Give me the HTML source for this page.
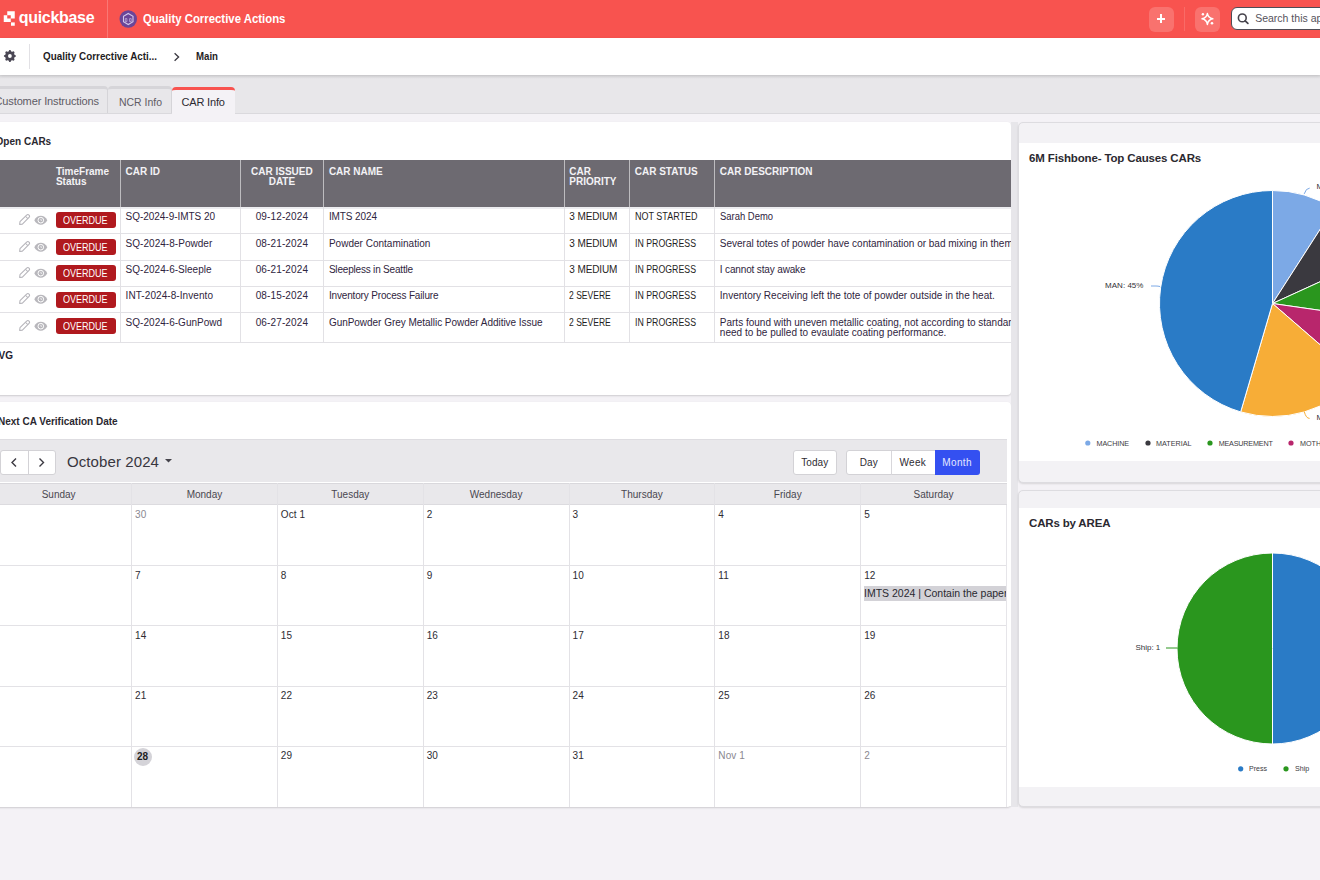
<!DOCTYPE html>
<html><head><meta charset="utf-8"><style>
html,body{margin:0;padding:0;}
body{width:1320px;height:880px;overflow:hidden;position:relative;background:#F4F2F6;font-family:"Liberation Sans",sans-serif;}
body>div,body>svg{position:absolute;}
.t{white-space:nowrap;}
</style></head><body>
<div style="left:0px;top:113px;width:1320px;height:767px;background:#F4F2F6;"></div>
<div style="left:0px;top:0px;width:1320px;height:38px;background:#F8534F;"></div>
<svg style="left:0;top:0" width="20" height="38"><path fill="#fff" fill-rule="evenodd" d="M7.25 11.25h7.5v7.25h-7.5z M3.75 15.25h7v6.75h-7z"/><rect x="11" y="22.4" width="3.75" height="3.35" fill="#fff"/></svg>
<div class="t" style="left:18.75px;top:9.66px;font-size:16px;line-height:16px;color:#fff;font-weight:700;letter-spacing:-0.307px;">quickbase</div>
<div style="left:107px;top:0px;width:1px;height:38px;background:rgba(255,255,255,0.22);"></div>
<svg style="left:119px;top:10px" width="18" height="18" viewBox="0 0 18 18"><circle cx="9.25" cy="9" r="8.75" fill="#6A4598"/><path d="M9.25 3.5 L14 6.25 L14 11.75 L9.25 14.5 L4.5 11.75 L4.5 6.25 Z" fill="none" stroke="#D3C7EA" stroke-width="1.1"/><path d="M6.3 8.6 h1.6 v3 h-1.6 z M10.6 8.6 h1.6 v3 h-1.6 z" fill="none" stroke="#C9BCE4" stroke-width="0.7"/></svg>
<div class="t" style="left:143.40px;top:12.84px;font-size:12px;line-height:12px;color:#fff;font-weight:700;transform:scaleX(0.9477);transform-origin:0 0;">Quality Corrective Actions</div>
<div style="left:1149px;top:6.5px;width:25px;height:25px;background:rgba(255,255,255,0.18);border-radius:6px;"></div>
<div style="left:1156.5px;top:18px;width:8.8px;height:1.6px;background:#fff;"></div>
<div style="left:1160.1px;top:14.4px;width:1.6px;height:8.8px;background:#fff;"></div>
<div style="left:1184.3px;top:7.3px;width:1px;height:23.4px;background:rgba(255,255,255,0.14);"></div>
<div style="left:1195.3px;top:6.5px;width:25px;height:25px;background:rgba(255,255,255,0.18);border-radius:6px;"></div>
<svg style="left:1195px;top:6px" width="26" height="26" viewBox="0 0 26 26"><path d="M12.4 7.6 Q13.2 11.9 17.8 12.8 Q13.2 13.7 12.4 18.4 Q11.6 13.7 7 12.8 Q11.6 11.9 12.4 7.6 Z" fill="none" stroke="#fff" stroke-width="1.5" stroke-linejoin="round"/><circle cx="7.9" cy="8.3" r="1.2" fill="#fff"/><circle cx="17" cy="17.3" r="1.3" fill="#fff"/></svg>
<div style="left:1230.6px;top:7.3px;width:120px;height:23.2px;background:#fff;border:1.2px solid #4F4C55;border-radius:6px;box-sizing:border-box;"></div>
<svg style="left:1236px;top:11px" width="16" height="16" viewBox="0 0 16 16"><circle cx="6.3" cy="6.9" r="3.9" fill="none" stroke="#46434C" stroke-width="1.6"/><path d="M9.2 9.8 L11.9 12.3" stroke="#46434C" stroke-width="1.7" stroke-linecap="round"/></svg>
<div class="t" style="left:1255.20px;top:12.91px;font-size:10.5px;line-height:10.5px;color:#55525C;">Search this app</div>
<div style="left:0px;top:38px;width:1320px;height:37px;background:#fff;box-shadow:0 1px 3px rgba(0,0,0,0.12);z-index:2;"></div>
<svg style="left:0;top:38px;z-index:3" width="30" height="37"><path fill="#4A4754" fill-rule="evenodd" d="M8.56 13.39 L9.29 12.03 L10.51 12.03 L11.24 13.39 L12.21 13.79 L13.69 13.35 L14.55 14.21 L14.11 15.69 L14.51 16.66 L15.87 17.39 L15.87 18.61 L14.51 19.34 L14.11 20.31 L14.55 21.79 L13.69 22.65 L12.21 22.21 L11.24 22.61 L10.51 23.97 L9.29 23.97 L8.56 22.61 L7.59 22.21 L6.11 22.65 L5.25 21.79 L5.69 20.31 L5.29 19.34 L3.93 18.61 L3.93 17.39 L5.29 16.66 L5.69 15.69 L5.25 14.21 L6.11 13.35 L7.59 13.79 Z M11.8 18 A1.9 1.9 0 1 0 8.0 18 A1.9 1.9 0 1 0 11.8 18 Z"/></svg>
<div style="left:29.3px;top:44px;width:1px;height:25px;background:#E2E1E5;z-index:3;"></div>
<div class="t" style="left:43.00px;top:50.69px;font-size:11px;line-height:11px;color:#1F1D24;font-weight:700;transform:scaleX(0.8951);transform-origin:0 0;z-index:3;">Quality Corrective Acti...</div>
<svg style="left:170px;top:50px;z-index:3" width="12" height="14" viewBox="0 0 12 14"><path d="M4.6 3.2 L8.6 7 L4.6 10.8" fill="none" stroke="#3A3840" stroke-width="1.3"/></svg>
<div class="t" style="left:196.00px;top:50.69px;font-size:11px;line-height:11px;color:#1F1D24;font-weight:700;transform:scaleX(0.8780);transform-origin:0 0;z-index:3;">Main</div>
<div style="left:0px;top:75px;width:1320px;height:38px;background:#E8E7EA;"></div>
<div style="left:0px;top:75px;width:1320px;height:4px;background:linear-gradient(rgba(0,0,0,0.06),rgba(0,0,0,0));"></div>
<div style="left:0px;top:112.5px;width:1320px;height:1px;background:#DAD9DD;"></div>
<div style="left:-20px;top:86.3px;width:128px;height:26.7px;background:#E8E7EA;border-top:3.3px solid #D6D5D9;border-right:1px solid #D5D4D8;border-radius:4px 4px 0 0;box-sizing:border-box;"></div>
<div class="t" style="left:-5.50px;top:96.49px;font-size:11px;line-height:11px;color:#5E5B65;letter-spacing:-0.123px;">Customer Instructions</div>
<div style="left:108px;top:86.3px;width:64px;height:26.7px;background:#E8E7EA;border-top:3.3px solid #D6D5D9;border-right:1px solid #D5D4D8;border-radius:4px 4px 0 0;box-sizing:border-box;"></div>
<div class="t" style="left:118.80px;top:96.59px;font-size:11px;line-height:11px;color:#5E5B65;transform:scaleX(0.9506);transform-origin:0 0;">NCR Info</div>
<div style="left:172px;top:86.6px;width:62.5px;height:27.4px;background:#F4F2F6;border-top:3px solid #F8534F;border-radius:4px 4px 0 0;box-sizing:border-box;z-index:2;"></div>
<div class="t" style="left:181.50px;top:96.59px;font-size:11px;line-height:11px;color:#2C2A31;letter-spacing:-0.166px;z-index:3;">CAR Info</div>
<div style="left:-14px;top:122px;width:1025px;height:273px;background:#fff;border-radius:4px;box-shadow:0 1px 2px rgba(0,0,0,0.16);"></div>
<div class="t" style="left:-4.50px;top:137.03px;font-size:10px;line-height:10px;color:#2A2830;font-weight:700;letter-spacing:0.015px;">Open CARs</div>
<div style="left:-14px;top:160.2px;width:1024.5px;height:47px;background:#6D6A71;"></div>
<div style="left:120.0px;top:160.2px;width:1px;height:47px;background:rgba(255,255,255,0.55);"></div>
<div style="left:239.9px;top:160.2px;width:1px;height:47px;background:rgba(255,255,255,0.55);"></div>
<div style="left:322.7px;top:160.2px;width:1px;height:47px;background:rgba(255,255,255,0.55);"></div>
<div style="left:564.1px;top:160.2px;width:1px;height:47px;background:rgba(255,255,255,0.55);"></div>
<div style="left:629.0px;top:160.2px;width:1px;height:47px;background:rgba(255,255,255,0.55);"></div>
<div style="left:713.9px;top:160.2px;width:1px;height:47px;background:rgba(255,255,255,0.55);"></div>
<div class="t" style="left:55.90px;top:166.53px;font-size:10px;line-height:10px;color:#F3F2F5;font-weight:700;">TimeFrame</div>
<div class="t" style="left:55.90px;top:176.94px;font-size:10px;line-height:10px;color:#F3F2F5;font-weight:700;">Status</div>
<div class="t" style="left:125.60px;top:166.53px;font-size:10px;line-height:10px;color:#F3F2F5;font-weight:700;">CAR ID</div>
<div class="t" style="left:251.06px;top:166.53px;font-size:10px;line-height:10px;color:#F3F2F5;font-weight:700;">CAR ISSUED</div>
<div class="t" style="left:268.66px;top:176.94px;font-size:10px;line-height:10px;color:#F3F2F5;font-weight:700;">DATE</div>
<div class="t" style="left:328.90px;top:166.53px;font-size:10px;line-height:10px;color:#F3F2F5;font-weight:700;">CAR NAME</div>
<div class="t" style="left:569.30px;top:166.53px;font-size:10px;line-height:10px;color:#F3F2F5;font-weight:700;">CAR</div>
<div class="t" style="left:569.30px;top:176.94px;font-size:10px;line-height:10px;color:#F3F2F5;font-weight:700;">PRIORITY</div>
<div class="t" style="left:634.70px;top:166.53px;font-size:10px;line-height:10px;color:#F3F2F5;font-weight:700;">CAR STATUS</div>
<div class="t" style="left:719.80px;top:166.53px;font-size:10px;line-height:10px;color:#F3F2F5;font-weight:700;">CAR DESCRIPTION</div>
<div style="left:-14px;top:207.2px;width:1024.5px;height:1.5px;background:#EDEDF0;"></div>
<div style="left:-14px;top:233.1px;width:1024.5px;height:1px;background:#E2E1E5;"></div>
<div style="left:-14px;top:259.5px;width:1024.5px;height:1px;background:#E2E1E5;"></div>
<div style="left:-14px;top:285.9px;width:1024.5px;height:1px;background:#E2E1E5;"></div>
<div style="left:-14px;top:312.3px;width:1024.5px;height:1px;background:#E2E1E5;"></div>
<div style="left:-14px;top:342.3px;width:1024.5px;height:1px;background:#E2E1E5;"></div>
<div style="left:120.0px;top:207.2px;width:1px;height:136px;background:#E2E1E5;"></div>
<div style="left:239.9px;top:207.2px;width:1px;height:136px;background:#E2E1E5;"></div>
<div style="left:322.7px;top:207.2px;width:1px;height:136px;background:#E2E1E5;"></div>
<div style="left:564.1px;top:207.2px;width:1px;height:136px;background:#E2E1E5;"></div>
<div style="left:629.0px;top:207.2px;width:1px;height:136px;background:#E2E1E5;"></div>
<div style="left:713.9px;top:207.2px;width:1px;height:136px;background:#E2E1E5;"></div>
<svg style="left:17px;top:207.2px" width="34" height="26" viewBox="17 0 34 26"><g transform="translate(24.3 12.8) rotate(-45)"><path d="M-6.6 0 L-4.4 -1.7 L5 -1.7 Q6.7 -1.7 6.7 0 Q6.7 1.7 5 1.7 L-4.4 1.7 Z" fill="none" stroke="#B5B4BA" stroke-width="1.05" stroke-linejoin="round"/><path d="M3.3 -1.7 V1.7" stroke="#B5B4BA" stroke-width="1"/></g><path d="M34.3 13.2 C37.2 7.3 44.4 7.3 47.3 13.2 C44.4 19.1 37.2 19.1 34.3 13.2 Z" fill="#B8B7BC"/><circle cx="40.8" cy="13.2" r="2.8" fill="none" stroke="#fff" stroke-width="1"/><circle cx="40.8" cy="13.2" r="1.7" fill="#B8B7BC"/><path d="M40.9 11.8 L40.9 13.3 L42.1 13.3" stroke="#fff" stroke-width="0.7" fill="none"/></svg>
<div style="left:55.5px;top:212.39999999999998px;width:60.4px;height:16.1px;background:#B0191E;border-radius:3px;"></div>
<div class="t" style="left:63.40px;top:215.19px;font-size:11px;line-height:11px;color:#fff;transform:scaleX(0.8199);transform-origin:0 0;">OVERDUE</div>
<div class="t" style="left:125.60px;top:212.23px;font-size:10px;line-height:10px;color:#2F2540;letter-spacing:-0.037px;">SQ-2024-9-IMTS 20</div>
<div class="t" style="left:255.70px;top:212.23px;font-size:10px;line-height:10px;color:#2F2540;letter-spacing:0.125px;">09-12-2024</div>
<div class="t" style="left:328.90px;top:212.23px;font-size:10px;line-height:10px;color:#2F2540;letter-spacing:-0.101px;">IMTS 2024</div>
<div class="t" style="left:569.30px;top:212.23px;font-size:10px;line-height:10px;color:#1F1E23;letter-spacing:-0.112px;">3 MEDIUM</div>
<div class="t" style="left:634.70px;top:212.23px;font-size:10px;line-height:10px;color:#1F1E23;transform:scaleX(0.8999);transform-origin:0 0;">NOT STARTED</div>
<div class="t" style="left:719.80px;top:212.23px;font-size:10px;line-height:10px;color:#2F2540;transform:scaleX(0.9441);transform-origin:0 0;">Sarah Demo</div>
<svg style="left:17px;top:233.6px" width="34" height="26" viewBox="17 0 34 26"><g transform="translate(24.3 12.8) rotate(-45)"><path d="M-6.6 0 L-4.4 -1.7 L5 -1.7 Q6.7 -1.7 6.7 0 Q6.7 1.7 5 1.7 L-4.4 1.7 Z" fill="none" stroke="#B5B4BA" stroke-width="1.05" stroke-linejoin="round"/><path d="M3.3 -1.7 V1.7" stroke="#B5B4BA" stroke-width="1"/></g><path d="M34.3 13.2 C37.2 7.3 44.4 7.3 47.3 13.2 C44.4 19.1 37.2 19.1 34.3 13.2 Z" fill="#B8B7BC"/><circle cx="40.8" cy="13.2" r="2.8" fill="none" stroke="#fff" stroke-width="1"/><circle cx="40.8" cy="13.2" r="1.7" fill="#B8B7BC"/><path d="M40.9 11.8 L40.9 13.3 L42.1 13.3" stroke="#fff" stroke-width="0.7" fill="none"/></svg>
<div style="left:55.5px;top:238.79999999999998px;width:60.4px;height:16.1px;background:#B0191E;border-radius:3px;"></div>
<div class="t" style="left:63.40px;top:241.59px;font-size:11px;line-height:11px;color:#fff;transform:scaleX(0.8199);transform-origin:0 0;">OVERDUE</div>
<div class="t" style="left:125.60px;top:238.63px;font-size:10px;line-height:10px;color:#2F2540;letter-spacing:0.034px;">SQ-2024-8-Powder</div>
<div class="t" style="left:255.70px;top:238.63px;font-size:10px;line-height:10px;color:#2F2540;letter-spacing:0.125px;">08-21-2024</div>
<div class="t" style="left:328.90px;top:238.63px;font-size:10px;line-height:10px;color:#2F2540;letter-spacing:0.016px;">Powder Contamination</div>
<div class="t" style="left:569.30px;top:238.63px;font-size:10px;line-height:10px;color:#1F1E23;letter-spacing:-0.112px;">3 MEDIUM</div>
<div class="t" style="left:634.70px;top:238.63px;font-size:10px;line-height:10px;color:#1F1E23;transform:scaleX(0.8782);transform-origin:0 0;">IN PROGRESS</div>
<div class="t" style="left:719.80px;top:238.63px;font-size:10px;line-height:10px;color:#2F2540;">Several totes of powder have contamination or bad mixing in them. Need</div>
<svg style="left:17px;top:260.0px" width="34" height="26" viewBox="17 0 34 26"><g transform="translate(24.3 12.8) rotate(-45)"><path d="M-6.6 0 L-4.4 -1.7 L5 -1.7 Q6.7 -1.7 6.7 0 Q6.7 1.7 5 1.7 L-4.4 1.7 Z" fill="none" stroke="#B5B4BA" stroke-width="1.05" stroke-linejoin="round"/><path d="M3.3 -1.7 V1.7" stroke="#B5B4BA" stroke-width="1"/></g><path d="M34.3 13.2 C37.2 7.3 44.4 7.3 47.3 13.2 C44.4 19.1 37.2 19.1 34.3 13.2 Z" fill="#B8B7BC"/><circle cx="40.8" cy="13.2" r="2.8" fill="none" stroke="#fff" stroke-width="1"/><circle cx="40.8" cy="13.2" r="1.7" fill="#B8B7BC"/><path d="M40.9 11.8 L40.9 13.3 L42.1 13.3" stroke="#fff" stroke-width="0.7" fill="none"/></svg>
<div style="left:55.5px;top:265.2px;width:60.4px;height:16.1px;background:#B0191E;border-radius:3px;"></div>
<div class="t" style="left:63.40px;top:267.99px;font-size:11px;line-height:11px;color:#fff;transform:scaleX(0.8199);transform-origin:0 0;">OVERDUE</div>
<div class="t" style="left:125.60px;top:265.04px;font-size:10px;line-height:10px;color:#2F2540;letter-spacing:0.023px;">SQ-2024-6-Sleeple</div>
<div class="t" style="left:255.70px;top:265.04px;font-size:10px;line-height:10px;color:#2F2540;letter-spacing:0.125px;">06-21-2024</div>
<div class="t" style="left:328.90px;top:265.04px;font-size:10px;line-height:10px;color:#2F2540;letter-spacing:-0.192px;">Sleepless in Seattle</div>
<div class="t" style="left:569.30px;top:265.04px;font-size:10px;line-height:10px;color:#1F1E23;letter-spacing:-0.112px;">3 MEDIUM</div>
<div class="t" style="left:634.70px;top:265.04px;font-size:10px;line-height:10px;color:#1F1E23;transform:scaleX(0.8782);transform-origin:0 0;">IN PROGRESS</div>
<div class="t" style="left:719.80px;top:265.04px;font-size:10px;line-height:10px;color:#2F2540;letter-spacing:-0.147px;">I cannot stay awake</div>
<svg style="left:17px;top:286.4px" width="34" height="26" viewBox="17 0 34 26"><g transform="translate(24.3 12.8) rotate(-45)"><path d="M-6.6 0 L-4.4 -1.7 L5 -1.7 Q6.7 -1.7 6.7 0 Q6.7 1.7 5 1.7 L-4.4 1.7 Z" fill="none" stroke="#B5B4BA" stroke-width="1.05" stroke-linejoin="round"/><path d="M3.3 -1.7 V1.7" stroke="#B5B4BA" stroke-width="1"/></g><path d="M34.3 13.2 C37.2 7.3 44.4 7.3 47.3 13.2 C44.4 19.1 37.2 19.1 34.3 13.2 Z" fill="#B8B7BC"/><circle cx="40.8" cy="13.2" r="2.8" fill="none" stroke="#fff" stroke-width="1"/><circle cx="40.8" cy="13.2" r="1.7" fill="#B8B7BC"/><path d="M40.9 11.8 L40.9 13.3 L42.1 13.3" stroke="#fff" stroke-width="0.7" fill="none"/></svg>
<div style="left:55.5px;top:291.59999999999997px;width:60.4px;height:16.1px;background:#B0191E;border-radius:3px;"></div>
<div class="t" style="left:63.40px;top:294.39px;font-size:11px;line-height:11px;color:#fff;transform:scaleX(0.8199);transform-origin:0 0;">OVERDUE</div>
<div class="t" style="left:125.60px;top:291.44px;font-size:10px;line-height:10px;color:#2F2540;letter-spacing:0.074px;">INT-2024-8-Invento</div>
<div class="t" style="left:255.70px;top:291.44px;font-size:10px;line-height:10px;color:#2F2540;letter-spacing:0.125px;">08-15-2024</div>
<div class="t" style="left:328.90px;top:291.44px;font-size:10px;line-height:10px;color:#2F2540;letter-spacing:-0.155px;">Inventory Process Failure</div>
<div class="t" style="left:569.30px;top:291.44px;font-size:10px;line-height:10px;color:#1F1E23;transform:scaleX(0.8546);transform-origin:0 0;">2 SEVERE</div>
<div class="t" style="left:634.70px;top:291.44px;font-size:10px;line-height:10px;color:#1F1E23;transform:scaleX(0.8782);transform-origin:0 0;">IN PROGRESS</div>
<div class="t" style="left:719.80px;top:291.44px;font-size:10px;line-height:10px;color:#2F2540;letter-spacing:0.015px;">Inventory Receiving left the tote of powder outside in the heat.</div>
<svg style="left:17px;top:312.8px" width="34" height="26" viewBox="17 0 34 26"><g transform="translate(24.3 12.8) rotate(-45)"><path d="M-6.6 0 L-4.4 -1.7 L5 -1.7 Q6.7 -1.7 6.7 0 Q6.7 1.7 5 1.7 L-4.4 1.7 Z" fill="none" stroke="#B5B4BA" stroke-width="1.05" stroke-linejoin="round"/><path d="M3.3 -1.7 V1.7" stroke="#B5B4BA" stroke-width="1"/></g><path d="M34.3 13.2 C37.2 7.3 44.4 7.3 47.3 13.2 C44.4 19.1 37.2 19.1 34.3 13.2 Z" fill="#B8B7BC"/><circle cx="40.8" cy="13.2" r="2.8" fill="none" stroke="#fff" stroke-width="1"/><circle cx="40.8" cy="13.2" r="1.7" fill="#B8B7BC"/><path d="M40.9 11.8 L40.9 13.3 L42.1 13.3" stroke="#fff" stroke-width="0.7" fill="none"/></svg>
<div style="left:55.5px;top:318.0px;width:60.4px;height:16.1px;background:#B0191E;border-radius:3px;"></div>
<div class="t" style="left:63.40px;top:320.79px;font-size:11px;line-height:11px;color:#fff;transform:scaleX(0.8199);transform-origin:0 0;">OVERDUE</div>
<div class="t" style="left:125.60px;top:317.84px;font-size:10px;line-height:10px;color:#2F2540;letter-spacing:0.026px;">SQ-2024-6-GunPowd</div>
<div class="t" style="left:255.70px;top:317.84px;font-size:10px;line-height:10px;color:#2F2540;letter-spacing:0.125px;">06-27-2024</div>
<div class="t" style="left:328.90px;top:317.84px;font-size:10px;line-height:10px;color:#2F2540;letter-spacing:-0.031px;">GunPowder Grey Metallic Powder Additive Issue</div>
<div class="t" style="left:569.30px;top:317.84px;font-size:10px;line-height:10px;color:#1F1E23;transform:scaleX(0.8546);transform-origin:0 0;">2 SEVERE</div>
<div class="t" style="left:634.70px;top:317.84px;font-size:10px;line-height:10px;color:#1F1E23;transform:scaleX(0.8782);transform-origin:0 0;">IN PROGRESS</div>
<div class="t" style="left:719.80px;top:317.84px;font-size:10px;line-height:10px;color:#2F2540;">Parts found with uneven metallic coating, not according to standards. These</div>
<div class="t" style="left:719.80px;top:327.84px;font-size:10px;line-height:10px;color:#2F2540;letter-spacing:0.027px;">need to be pulled to evaulate coating performance.</div>
<div class="t" style="left:-1.50px;top:351.34px;font-size:10px;line-height:10px;color:#221C30;font-weight:700;">VG</div>
<div style="left:-14px;top:401.5px;width:1025px;height:405.2px;background:#fff;border-radius:4px;box-shadow:0 1px 2px rgba(0,0,0,0.16);"></div>
<div class="t" style="left:-2.00px;top:416.74px;font-size:10px;line-height:10px;color:#2A2830;font-weight:700;letter-spacing:-0.003px;">Next CA Verification Date</div>
<div style="left:-14px;top:439.2px;width:1020.5px;height:43.3px;background:#E9E8EB;border-top:1px solid #DEDDE1;box-sizing:border-box;"></div>
<div style="left:0.3px;top:450.1px;width:55.4px;height:24.6px;background:#fff;border:1px solid #D3D2D6;border-radius:3px;box-sizing:border-box;"></div>
<div style="left:27.8px;top:450.1px;width:1px;height:24.6px;background:#D3D2D6;"></div>
<svg style="left:0px;top:450px" width="56" height="25" viewBox="0 0 56 25"><path d="M16 8.4 L12 12.4 L16 16.4" fill="none" stroke="#3C3A42" stroke-width="1.4"/><path d="M39.5 8.4 L43.5 12.4 L39.5 16.4" fill="none" stroke="#3C3A42" stroke-width="1.4"/></svg>
<div class="t" style="left:67.00px;top:454.30px;font-size:15px;line-height:15px;color:#38363E;letter-spacing:0.092px;">October 2024</div>
<svg style="left:163px;top:457px" width="12" height="8" viewBox="0 0 12 8"><path d="M2 2 L9 2 L5.5 5.6 Z" fill="#45434B"/></svg>
<div style="left:792.7px;top:450.2px;width:44.2px;height:24.6px;background:#fff;border:1px solid #D3D2D6;border-radius:3px;box-sizing:border-box;"></div>
<div class="t" style="left:801.30px;top:457.54px;font-size:10px;line-height:10px;color:#2E2C33;letter-spacing:0.063px;">Today</div>
<div style="left:846.4px;top:450.2px;width:133.4px;height:24.6px;background:#fff;border:1px solid #D3D2D6;border-radius:3px;box-sizing:border-box;"></div>
<div style="left:890.5px;top:450.5px;width:1px;height:24px;background:#D8D7DB;"></div>
<div style="left:934.7px;top:450.2px;width:45.1px;height:24.6px;background:#3450F1;border-radius:0 3px 3px 0;"></div>
<div class="t" style="left:859.70px;top:457.54px;font-size:10px;line-height:10px;color:#2E2C33;letter-spacing:0.139px;">Day</div>
<div class="t" style="left:899.55px;top:457.54px;font-size:10px;line-height:10px;color:#2E2C33;letter-spacing:0.280px;">Week</div>
<div class="t" style="left:942.35px;top:457.54px;font-size:10px;line-height:10px;color:#E6E9FF;letter-spacing:0.341px;">Month</div>
<div style="left:-14px;top:482.5px;width:1020.5px;height:22px;background:#E9E8EB;border-top:1px solid #D9D8DC;border-bottom:1px solid #DCDBDF;box-sizing:border-box;"></div>
<div class="t" style="left:41.66px;top:490.14px;font-size:10px;line-height:10px;color:#4A4750;">Sunday</div>
<div class="t" style="left:186.66px;top:490.14px;font-size:10px;line-height:10px;color:#4A4750;">Monday</div>
<div style="left:131.03px;top:482.5px;width:1px;height:324px;background:#E3E2E6;"></div>
<div class="t" style="left:331.28px;top:490.14px;font-size:10px;line-height:10px;color:#4A4750;">Tuesday</div>
<div style="left:276.86px;top:482.5px;width:1px;height:324px;background:#E3E2E6;"></div>
<div class="t" style="left:469.79px;top:490.14px;font-size:10px;line-height:10px;color:#4A4750;">Wednesday</div>
<div style="left:422.69px;top:482.5px;width:1px;height:324px;background:#E3E2E6;"></div>
<div class="t" style="left:621.09px;top:490.14px;font-size:10px;line-height:10px;color:#4A4750;">Thursday</div>
<div style="left:568.5200000000001px;top:482.5px;width:1px;height:324px;background:#E3E2E6;"></div>
<div class="t" style="left:773.87px;top:490.14px;font-size:10px;line-height:10px;color:#4A4750;">Friday</div>
<div style="left:714.3500000000001px;top:482.5px;width:1px;height:324px;background:#E3E2E6;"></div>
<div class="t" style="left:913.58px;top:490.14px;font-size:10px;line-height:10px;color:#4A4750;">Saturday</div>
<div style="left:860.1800000000001px;top:482.5px;width:1px;height:324px;background:#E3E2E6;"></div>
<div style="left:-14px;top:565.0px;width:1020.5px;height:1px;background:#E3E2E6;"></div>
<div style="left:-14px;top:625.0px;width:1020.5px;height:1px;background:#E3E2E6;"></div>
<div style="left:-14px;top:685.7px;width:1020.5px;height:1px;background:#E3E2E6;"></div>
<div style="left:-14px;top:745.7px;width:1020.5px;height:1px;background:#E3E2E6;"></div>
<div class="t" style="left:135.03px;top:509.64px;font-size:10px;line-height:10px;color:#8A8890;letter-spacing:0.111px;">30</div>
<div class="t" style="left:280.86px;top:509.64px;font-size:10px;line-height:10px;color:#2E2C33;letter-spacing:0.096px;">Oct 1</div>
<div class="t" style="left:426.69px;top:509.64px;font-size:10px;line-height:10px;color:#2E2C33;letter-spacing:0.111px;">2</div>
<div class="t" style="left:572.52px;top:509.64px;font-size:10px;line-height:10px;color:#2E2C33;letter-spacing:0.111px;">3</div>
<div class="t" style="left:718.35px;top:509.64px;font-size:10px;line-height:10px;color:#2E2C33;letter-spacing:0.111px;">4</div>
<div class="t" style="left:864.18px;top:509.64px;font-size:10px;line-height:10px;color:#2E2C33;letter-spacing:0.111px;">5</div>
<div class="t" style="left:135.03px;top:570.63px;font-size:10px;line-height:10px;color:#2E2C33;letter-spacing:0.111px;">7</div>
<div class="t" style="left:280.86px;top:570.63px;font-size:10px;line-height:10px;color:#2E2C33;letter-spacing:0.111px;">8</div>
<div class="t" style="left:426.69px;top:570.63px;font-size:10px;line-height:10px;color:#2E2C33;letter-spacing:0.111px;">9</div>
<div class="t" style="left:572.52px;top:570.63px;font-size:10px;line-height:10px;color:#2E2C33;letter-spacing:0.111px;">10</div>
<div class="t" style="left:718.35px;top:570.63px;font-size:10px;line-height:10px;color:#2E2C33;letter-spacing:0.104px;">11</div>
<div class="t" style="left:864.18px;top:570.63px;font-size:10px;line-height:10px;color:#2E2C33;letter-spacing:0.111px;">12</div>
<div class="t" style="left:135.03px;top:630.63px;font-size:10px;line-height:10px;color:#2E2C33;letter-spacing:0.111px;">14</div>
<div class="t" style="left:280.86px;top:630.63px;font-size:10px;line-height:10px;color:#2E2C33;letter-spacing:0.111px;">15</div>
<div class="t" style="left:426.69px;top:630.63px;font-size:10px;line-height:10px;color:#2E2C33;letter-spacing:0.111px;">16</div>
<div class="t" style="left:572.52px;top:630.63px;font-size:10px;line-height:10px;color:#2E2C33;letter-spacing:0.111px;">17</div>
<div class="t" style="left:718.35px;top:630.63px;font-size:10px;line-height:10px;color:#2E2C33;letter-spacing:0.111px;">18</div>
<div class="t" style="left:864.18px;top:630.63px;font-size:10px;line-height:10px;color:#2E2C33;letter-spacing:0.111px;">19</div>
<div class="t" style="left:135.03px;top:691.34px;font-size:10px;line-height:10px;color:#2E2C33;letter-spacing:0.111px;">21</div>
<div class="t" style="left:280.86px;top:691.34px;font-size:10px;line-height:10px;color:#2E2C33;letter-spacing:0.111px;">22</div>
<div class="t" style="left:426.69px;top:691.34px;font-size:10px;line-height:10px;color:#2E2C33;letter-spacing:0.111px;">23</div>
<div class="t" style="left:572.52px;top:691.34px;font-size:10px;line-height:10px;color:#2E2C33;letter-spacing:0.111px;">24</div>
<div class="t" style="left:718.35px;top:691.34px;font-size:10px;line-height:10px;color:#2E2C33;letter-spacing:0.111px;">25</div>
<div class="t" style="left:864.18px;top:691.34px;font-size:10px;line-height:10px;color:#2E2C33;letter-spacing:0.111px;">26</div>
<div style="left:133.6px;top:747.5px;width:18px;height:18px;background:#D4D3D8;border-radius:50%;"></div>
<div class="t" style="left:137.04px;top:751.63px;font-size:10px;line-height:10px;color:#1E1D22;font-weight:700;">28</div>
<div class="t" style="left:280.86px;top:751.34px;font-size:10px;line-height:10px;color:#2E2C33;letter-spacing:0.111px;">29</div>
<div class="t" style="left:426.69px;top:751.34px;font-size:10px;line-height:10px;color:#2E2C33;letter-spacing:0.111px;">30</div>
<div class="t" style="left:572.52px;top:751.34px;font-size:10px;line-height:10px;color:#2E2C33;letter-spacing:0.111px;">31</div>
<div class="t" style="left:718.35px;top:751.34px;font-size:10px;line-height:10px;color:#8A8890;letter-spacing:0.104px;">Nov 1</div>
<div class="t" style="left:864.18px;top:751.34px;font-size:10px;line-height:10px;color:#8A8890;letter-spacing:0.111px;">2</div>
<div style="left:863.8px;top:586.2px;width:142.2px;height:14.7px;background:#D3D2D7;overflow:hidden;"></div>
<div class="t" style="left:864px;top:586.2px;width:142px;height:14.7px;overflow:hidden;white-space:nowrap;font-size:10.5px;line-height:14.7px;color:#2A2930;">IMTS 2024 | Contain the paper work</div>
<div style="left:1006.5px;top:439.2px;width:4.5px;height:367px;background:#fff;"></div>
<div style="left:1006px;top:504.5px;width:1px;height:302px;background:#E6E5E9;"></div>
<div style="left:1011px;top:122px;width:7px;height:684.7px;background:#E7E6EA;z-index:5;"></div>
<div style="left:1018px;top:122px;width:320px;height:360.5px;background:#F3F2F5;border:1px solid #DDDCE0;border-radius:5px;box-sizing:border-box;box-shadow:0 1px 2px rgba(0,0,0,0.12);z-index:5;"></div>
<div style="left:1019px;top:143px;width:320px;height:318.0px;background:#fff;z-index:5;"></div>
<div style="left:1018px;top:490px;width:320px;height:316.5px;background:#F3F2F5;border:1px solid #DDDCE0;border-radius:5px;box-sizing:border-box;box-shadow:0 1px 2px rgba(0,0,0,0.12);z-index:5;"></div>
<div style="left:1019px;top:508px;width:320px;height:279.0px;background:#fff;z-index:5;"></div>
<svg style="left:1018px;top:113px;z-index:6" width="302" height="767" viewBox="1018 113 302 767"><path d="M1272.5 303.5 L1272.50 190.50 A113 113 0 0 1 1333.59 208.44 Z" fill="#7CA9E6" stroke="#fff" stroke-width="1" stroke-linejoin="round"/><path d="M1272.5 303.5 L1333.59 208.44 A113 113 0 0 1 1375.29 256.56 Z" fill="#3A393F" stroke="#fff" stroke-width="1" stroke-linejoin="round"/><path d="M1272.5 303.5 L1375.29 256.56 A113 113 0 0 1 1384.35 319.58 Z" fill="#2A961E" stroke="#fff" stroke-width="1" stroke-linejoin="round"/><path d="M1272.5 303.5 L1384.35 319.58 A113 113 0 0 1 1357.90 377.50 Z" fill="#B8266C" stroke="#fff" stroke-width="1" stroke-linejoin="round"/><path d="M1272.5 303.5 L1357.90 377.50 A113 113 0 0 1 1240.66 411.92 Z" fill="#F7AD37" stroke="#fff" stroke-width="1" stroke-linejoin="round"/><path d="M1272.5 303.5 L1240.66 411.92 A113 113 0 0 1 1272.50 190.50 Z" fill="#2A7BC6" stroke="#fff" stroke-width="1" stroke-linejoin="round"/><path d="M1151 286 L1156 286 Q1158 286 1160 286.5" fill="none" stroke="#7CA9E6" stroke-width="1"/><path d="M1304.2 193.9 Q1306 188.1 1309.7 188.1" fill="none" stroke="#7CA9E6" stroke-width="1"/><path d="M1304.3 411.7 Q1306 418.4 1309.6 418.4" fill="none" stroke="#F7AD37" stroke-width="1"/><path d="M1272.5 648.5 L1272.50 553.00 A95.5 95.5 0 0 1 1272.50 744.00 Z" fill="#2A7BC6" stroke="#fff" stroke-width="1" stroke-linejoin="round"/><path d="M1272.5 648.5 L1272.50 744.00 A95.5 95.5 0 0 1 1272.50 553.00 Z" fill="#2A961E" stroke="#fff" stroke-width="1" stroke-linejoin="round"/><path d="M1166 648 L1177.5 648" fill="none" stroke="#2A961E" stroke-width="1"/><circle cx="1087.8" cy="443" r="2.6" fill="#7CA9E6"/><circle cx="1148" cy="443" r="2.6" fill="#3A393F"/><circle cx="1210" cy="443" r="2.6" fill="#2A961E"/><circle cx="1291" cy="443" r="2.6" fill="#B8266C"/><circle cx="1240.7" cy="768.8" r="2.6" fill="#2A7BC6"/><circle cx="1286" cy="768.8" r="2.6" fill="#2A961E"/></svg>
<div class="t" style="left:1029.10px;top:152.97px;font-size:11.5px;line-height:11.5px;color:#2B2930;font-weight:700;letter-spacing:-0.148px;z-index:7;">6M Fishbone- Top Causes CARs</div>
<div class="t" style="left:1029.00px;top:518.27px;font-size:11.5px;line-height:11.5px;color:#2B2930;font-weight:700;letter-spacing:-0.165px;z-index:7;">CARs by AREA</div>
<div class="t" style="left:1105.00px;top:282.23px;font-size:8px;line-height:8px;color:#333238;letter-spacing:0.033px;z-index:7;">MAN: 45%</div>
<div class="t" style="left:1316.50px;top:183.23px;font-size:8px;line-height:8px;color:#333238;z-index:7;">MACHINE: 9%</div>
<div class="t" style="left:1316.60px;top:414.23px;font-size:8px;line-height:8px;color:#333238;z-index:7;">METHOD: 18%</div>
<div class="t" style="left:1135.50px;top:644.23px;font-size:8px;line-height:8px;color:#333238;letter-spacing:-0.015px;z-index:7;">Ship: 1</div>
<div class="t" style="left:1096.50px;top:439.51px;font-size:7.2px;line-height:7.2px;color:#3C3B42;letter-spacing:-0.100px;z-index:7;">MACHINE</div>
<div class="t" style="left:1156.00px;top:439.51px;font-size:7.2px;line-height:7.2px;color:#3C3B42;letter-spacing:0.003px;z-index:7;">MATERIAL</div>
<div class="t" style="left:1218.70px;top:439.51px;font-size:7.2px;line-height:7.2px;color:#3C3B42;letter-spacing:-0.182px;z-index:7;">MEASUREMENT</div>
<div class="t" style="left:1300.00px;top:439.51px;font-size:7.2px;line-height:7.2px;color:#3C3B42;z-index:7;">MOTHER NATURE</div>
<div class="t" style="left:1249.00px;top:765.15px;font-size:7.5px;line-height:7.5px;color:#3C3B42;transform:scaleX(0.9389);transform-origin:0 0;z-index:7;">Press</div>
<div class="t" style="left:1294.70px;top:765.15px;font-size:7.5px;line-height:7.5px;color:#3C3B42;transform:scaleX(0.9526);transform-origin:0 0;z-index:7;">Ship</div>
</body></html>
